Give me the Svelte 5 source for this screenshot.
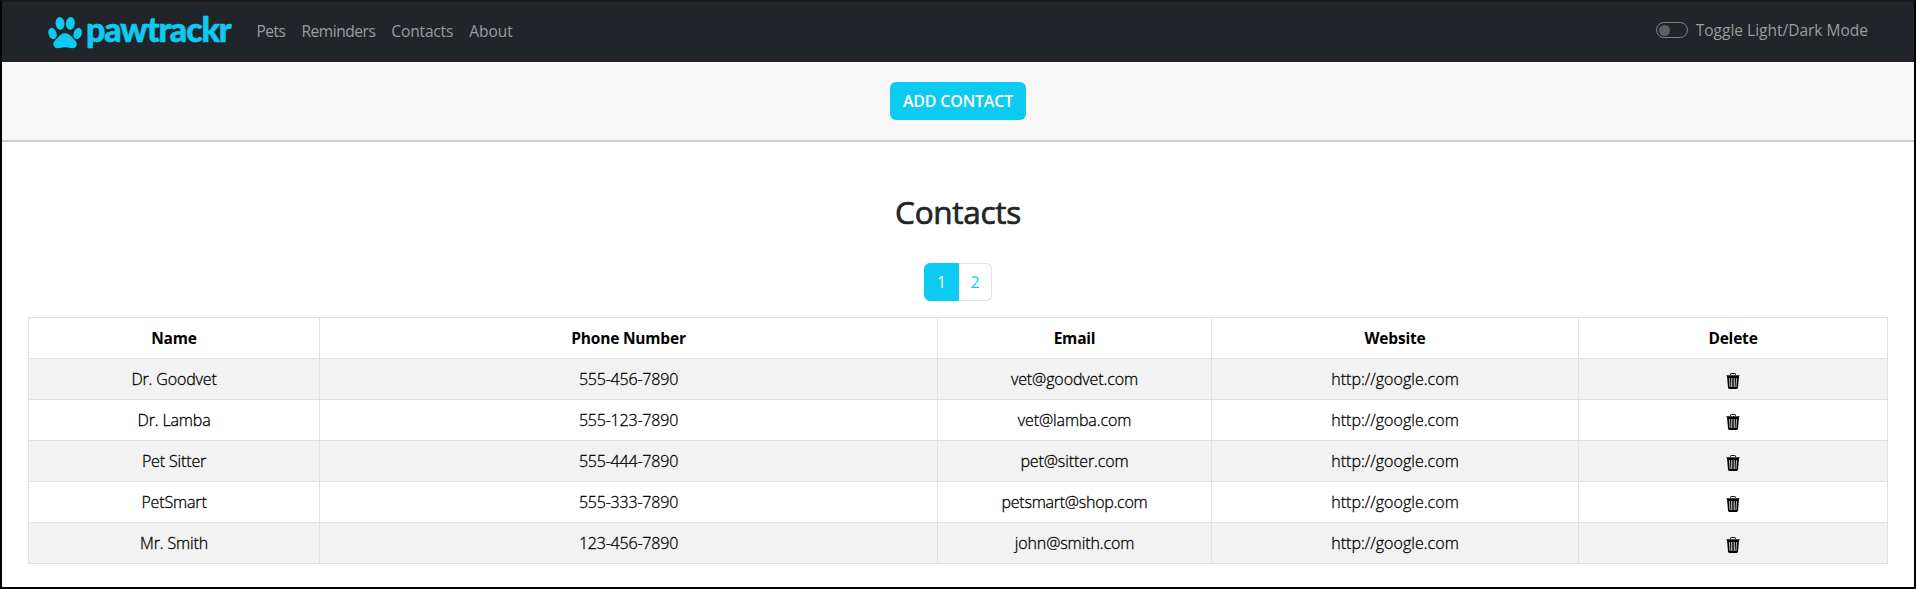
<script>
  const links = [
    { label: 'Pets', tracking: -0.5 },
    { label: 'Reminders', tracking: -0.45 },
    { label: 'Contacts', tracking: -0.15 },
    { label: 'About', tracking: -0.05 }
  ];
  const columns = ['Name', 'Phone Number', 'Email', 'Website', 'Delete'];
  const contacts = [
    { name: 'Dr. Goodvet', phone: '555-456-7890', email: 'vet@goodvet.com', site: 'http://google.com' },
    { name: 'Dr. Lamba', phone: '555-123-7890', email: 'vet@lamba.com', site: 'http://google.com' },
    { name: 'Pet Sitter', phone: '555-444-7890', email: 'pet@sitter.com', site: 'http://google.com' },
    { name: 'PetSmart', phone: '555-333-7890', email: 'petsmart@shop.com', site: 'http://google.com' },
    { name: 'Mr. Smith', phone: '123-456-7890', email: 'john@smith.com', site: 'http://google.com' }
  ];
  let page = $state(1);
  let dark = $state(false);
</script>

<div class="frame">
  <nav class="navbar">
    <a class="brand" href="#home">
      <svg class="paw" viewBox="0 0 34 33" width="34" height="33" aria-hidden="true">
        <ellipse cx="12" cy="7.3" rx="4.5" ry="6.4" transform="rotate(-6 12 7.3)" />
        <ellipse cx="22.4" cy="7.3" rx="4.5" ry="6.4" transform="rotate(6 22.4 7.3)" />
        <ellipse cx="4.5" cy="17.5" rx="4" ry="5.9" transform="rotate(-18 4.5 17.5)" />
        <ellipse cx="29.7" cy="17.5" rx="4" ry="5.9" transform="rotate(18 29.7 17.5)" />
        <path d="M17.1 17.2C20.3 17.2 22.2 19.2 24.2 21.4C26.4 23.8 29.2 25.4 28.7 28.8C28.2 32.2 25 32.5 22.7 32C18.5 31 15.7 31 11.5 32C9.2 32.5 6 32.2 5.5 28.8C5 25.4 7.8 23.8 10 21.4C12 19.2 13.9 17.2 17.1 17.2Z" />
      </svg>
      <span class="wordmark">pawtrackr</span>
    </a>
    <ul class="links">
      {#each links as link}
        <li><a href="#{link.label.toLowerCase()}" style="letter-spacing: {link.tracking}px">{link.label}</a></li>
      {/each}
    </ul>
    <button class="mode" role="switch" aria-checked={dark} onclick={() => (dark = !dark)}>
      <span class="switch" class:on={dark}></span>
      <span>Toggle Light/Dark Mode</span>
    </button>
  </nav>

  <div class="toolbar"><button class="add">ADD CONTACT</button></div>

  <main>
    <h2>Contacts</h2>
    <div class="pages">
      {#each [1, 2] as n}
        <button class:active={page === n} onclick={() => (page = n)}>{n}</button>
      {/each}
    </div>
    <table>
      <colgroup><col class="c1" /><col class="c2" /><col class="c3" /><col class="c4" /><col class="c5" /></colgroup>
      <thead>
        <tr>{#each columns as column}<th>{column}</th>{/each}</tr>
      </thead>
      <tbody>
        {#each contacts as contact}
          <tr>
            <td>{contact.name}</td>
            <td class="phone">{contact.phone}</td>
            <td class="email" class:long={contact.email.length > 16}>{contact.email}</td>
            <td class="site">{contact.site}</td>
            <td class="delete">
              <svg viewBox="0 0 14 16" width="14" height="16" aria-hidden="true">
                <path d="M4.5 2.5V1.3Q4.5.5 5.3.5H8.7Q9.5.5 9.5 1.3V2.5" fill="none" stroke="#000" />
                <path d="M.4 2H13.6V3.2H.4Z" fill="#444" />
                <path d="M1 3H13L12 14.6Q11.8 16 10.6 16H3.4Q2.2 16 2 14.6Z" />
                <path d="M3.4 5L4 14M5.6 5V14M8.4 5V14M10.6 5L10 14" stroke="#b5b5b5" stroke-width="1" />
                <path d="M7 5V14" stroke="#666" />
              </svg>
            </td>
          </tr>
        {/each}
      </tbody>
    </table>
  </main>
</div>

<style>
  :global(body) { margin: 0; background: #fff; }
  .frame {
    box-sizing: border-box;
    height: 589px;
    border: 2px solid #000;
    border-top-color: #1a1a1a;
    background: #fff;
    color: #212529;
    font: 16px/24px "Open Sans", sans-serif;
    overflow: hidden;
  }
  a { color: inherit; text-decoration: none; }
  button { font: inherit; border: 0; padding: 0; cursor: pointer; }
  .navbar {
    box-sizing: border-box;
    height: 60px;
    display: flex;
    align-items: center;
    padding: 0 46px;
    background: #212529;
    border-bottom: 1px solid #2a1c29;
    color: #9b9d9e;
    font-size: 15.5px;
  }
  .brand { display: flex; width: 185px; color: #0dcaf0; }
  .paw { flex: none; margin-top: 1px; fill: currentColor; }
  .wordmark {
    height: 33px;
    margin-left: 4px;
    font: 900 34px/27px Lato, sans-serif;
    letter-spacing: -1.15px;
    -webkit-text-stroke: 0.6px currentColor;
  }
  .links { display: flex; gap: 16px; margin: 0 0 2px 23.5px; padding: 0; list-style: none; }
  .mode { display: flex; align-items: center; gap: 8px; margin: 0 0 3px auto; background: none; color: inherit; }
  .switch {
    box-sizing: border-box;
    display: flex;
    align-items: center;
    width: 32px;
    height: 16px;
    padding: 0 2px;
    border: 1px solid #7f8184;
    border-radius: 8px;
  }
  .switch::before { content: ""; width: 11px; height: 11px; border-radius: 50%; background: #5d6063; }
  .switch.on { justify-content: flex-end; }
  .toolbar {
    box-sizing: border-box;
    display: flex;
    justify-content: center;
    align-items: flex-start;
    height: 80px;
    padding-top: 20px;
    background: #f8f8f8;
    border-bottom: 2px solid #ccc;
  }
  .add {
    width: 136px;
    height: 38px;
    border-radius: 6px;
    background: #0dcaf0;
    color: #fff;
    font-weight: 600;
    letter-spacing: -0.2px;
  }
  main { padding: 51px 26px 0; }
  h2 {
    margin: 0 0 32px;
    font-size: 31.5px;
    font-weight: 500;
    line-height: 38px;
    letter-spacing: -0.3px;
    text-align: center;
    -webkit-text-stroke: 0.7px currentColor;
  }
  .pages { display: flex; justify-content: center; height: 38px; margin-bottom: 16px; }
  .pages button {
    box-sizing: border-box;
    width: 33px;
    border: 1px solid #dee2e6;
    border-left: 0;
    border-radius: 0 6px 6px 0;
    background: #fff;
    color: #0dcaf0;
  }
  .pages button:first-child { width: 35px; border-left: 1px solid #dee2e6; border-radius: 6px 0 0 6px; }
  .pages button.active { border-color: #0dcaf0; background: #0dcaf0; color: #fff; }
  table {
    width: 1860px;
    table-layout: fixed;
    border-collapse: collapse;
    color: #000;
    text-align: center;
  }
  .c1 { width: 291px; }
  .c2 { width: 618px; }
  .c3 { width: 274px; }
  .c4 { width: 367px; }
  .c5 { width: 309px; }
  th, td { height: 24px; padding: 8px; border: 1px solid #dee2e6; }
  th { font-size: 15.5px; font-weight: 700; letter-spacing: -0.2px; }
  td { font-weight: 300; letter-spacing: -0.15px; -webkit-text-stroke: 0.3px currentColor; }
  tbody tr:nth-child(odd) { background: #f2f2f2; }
  .phone { letter-spacing: -0.2px; }
  .email { letter-spacing: -0.1px; }
  .email.long { letter-spacing: -0.25px; }
  .site { letter-spacing: 0.03px; }
  .delete svg { display: block; margin: 3px auto 0; }
</style>
